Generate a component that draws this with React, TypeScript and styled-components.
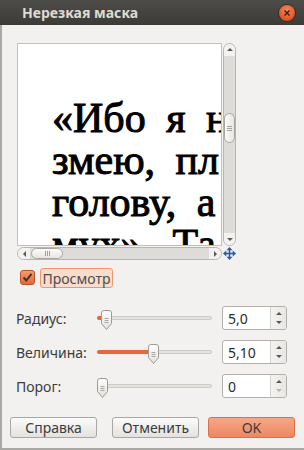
import React from 'react'
import styled, { createGlobalStyle } from 'styled-components'

const GlobalStyle = createGlobalStyle`
  html, body {
    margin: 0;
    padding: 0;
    background: #f2f1f0;
  }
  body {
    font-family: "Noto Sans", "DejaVu Sans", sans-serif;
    color: #3c3c3c;
  }
`

const Window = styled.div`
  width: 304px;
  height: 450px;
  display: flex;
  flex-direction: column;
  background: #f2f1f0;
  overflow: hidden;
`

const TitleBar = styled.div`
  height: 25px;
  flex: none;
  display: flex;
  align-items: center;
  justify-content: space-between;
  padding: 0 9px 0 22px;
  background: linear-gradient(#4d4c48, #3c3b37);
  color: #dfdbd2;
  font-size: 14px;
  font-weight: 700;
`

const CloseButton = styled.div`
  width: 16px;
  height: 16px;
  border-radius: 50%;
  display: flex;
  align-items: center;
  justify-content: center;
  background: radial-gradient(circle at 50% 35%, #f58a5e, #df4f1e 75%);
  box-shadow: 0 0 0 1px #2e2d2a;
`

const Body = styled.div`
  flex: 1;
  display: flex;
  flex-direction: column;
  border-left: 2px solid #a9a8a4;
  border-bottom: 2px solid #a9a8a4;
`

const PreviewGrid = styled.div`
  margin: 18px 0 0 15px;
  display: grid;
  grid-template-columns: 205px 14px;
  grid-template-rows: 203px 13px;
`

const ImageBox = styled.div`
  box-sizing: border-box;
  border: 1px solid #c3c0bb;
  background: #fff;
  overflow: hidden;
  padding: 53px 0 0 34px;
  font-family: "Liberation Serif", "Times New Roman", serif;
  font-weight: 400;
  font-size: 42px;
  line-height: 42px;
  color: #000;
  -webkit-text-stroke: 1px #000;
  word-spacing: 10px;
`

const TextLine = styled.div`
  white-space: nowrap;
`

const VScroll = styled.div`
  box-sizing: border-box;
  margin-left: 1px;
  width: 13px;
  border: 1px solid #b8b5b0;
  border-radius: 7px;
  background: #dedcd8;
  display: flex;
  flex-direction: column;
  overflow: hidden;
`

const HScroll = styled.div`
  box-sizing: border-box;
  height: 13px;
  margin-top: 1px;
  border: 1px solid #b8b5b0;
  border-radius: 7px;
  background: #dedcd8;
  display: flex;
  overflow: hidden;
`

const Stepper = styled.div<{ $vertical?: boolean }>`
  flex: none;
  ${({ $vertical }) => ($vertical ? 'height: 12px;' : 'width: 12px;')}
  display: flex;
  align-items: center;
  justify-content: center;
  background: #f3f2f0;
`

const Arrow = styled.span<{ $dir: 'up' | 'down' | 'left' | 'right'; $faded?: boolean }>`
  width: 0;
  height: 0;
  border: 3px solid transparent;
  ${({ $dir, $faded }) => {
    const c = $faded ? '#b9b6b1' : '#5a5955'
    if ($dir === 'up') return `border-bottom: 3px solid ${c}; border-top-width: 0; margin-top: -1px;`
    if ($dir === 'down') return `border-top: 3px solid ${c}; border-bottom-width: 0; margin-top: 1px;`
    if ($dir === 'left') return `border-right: 3px solid ${c}; border-left-width: 0;`
    return `border-left: 3px solid ${c}; border-right-width: 0;`
  }}
`

const Trough = styled.div<{ $vertical?: boolean }>`
  flex: 1;
  display: flex;
  flex-direction: ${({ $vertical }) => ($vertical ? 'column' : 'row')};
`

const Thumb = styled.div<{ $vertical?: boolean }>`
  box-sizing: border-box;
  flex: none;
  display: flex;
  align-items: center;
  justify-content: center;
  flex-direction: ${({ $vertical }) => ($vertical ? 'column' : 'row')};
  gap: 1px;
  border: 1px solid #a9a6a1;
  border-radius: 6px;
  background: ${({ $vertical }) =>
    $vertical ? 'linear-gradient(90deg, #fbfbfa, #e8e6e3)' : 'linear-gradient(#fbfbfa, #e8e6e3)'};
  ${({ $vertical }) => ($vertical ? 'width: 11px; height: 30px;' : 'height: 11px; width: 32px;')}
`

const Grip = styled.span<{ $vertical?: boolean }>`
  background: #a5a29d;
  ${({ $vertical }) => ($vertical ? 'width: 5px; height: 1px;' : 'width: 1px; height: 5px;')}
`

const NavCell = styled.div`
  display: flex;
  align-items: center;
  justify-content: center;
  margin-top: 1px;
`

const PreviewToggle = styled.label`
  margin: 7px 0 0 18px;
  display: flex;
  align-items: center;
  gap: 5px;
`

const CheckBox = styled.span`
  box-sizing: border-box;
  width: 15px;
  height: 15px;
  border: 1px solid #b85427;
  border-radius: 3px;
  background: linear-gradient(#f49c70, #e2683a);
  display: flex;
  align-items: center;
  justify-content: center;
`

const FocusLabel = styled.span`
  box-sizing: border-box;
  height: 20px;
  width: 73px;
  display: flex;
  align-items: center;
  justify-content: center;
  border: 1px solid #ec9770;
  border-radius: 3px;
  background: #f9dccc;
  font-size: 14px;
  color: #4c4c4c;
  margin-top: 2px;
`

const Settings = styled.div`
  margin: 18px 0 0 14px;
  display: grid;
  grid-template-columns: 71px 115px 65px;
  grid-auto-rows: 24px;
  column-gap: 10px;
  row-gap: 10px;
  align-items: center;
`

const FieldLabel = styled.span`
  font-size: 14px;
  color: #3c3c3c;
`

const SliderBox = styled.div`
  position: relative;
  height: 24px;
`

const Track = styled.div`
  position: absolute;
  left: 0;
  right: 0;
  top: 10px;
  height: 4px;
  box-sizing: border-box;
  border: 1px solid #cfccc7;
  border-radius: 2px;
  background: #e4e2de;
`

const Fill = styled.div`
  position: absolute;
  left: 0;
  top: 10px;
  height: 4px;
  border-radius: 2px;
  background: #e9653b;
`

const Knob = styled.svg`
  position: absolute;
  top: 4px;
`

const SpinBox = styled.div`
  box-sizing: border-box;
  height: 24px;
  display: flex;
  border: 1px solid #b3b0ab;
  border-radius: 3px;
  background: #fff;
  overflow: hidden;
`

const SpinValue = styled.span`
  flex: 1;
  display: flex;
  align-items: center;
  padding-left: 5px;
  font-size: 14px;
  color: #2b2b2b;
`

const SpinButtons = styled.div`
  width: 15px;
  border-left: 1px solid #d6d3ce;
  background: linear-gradient(90deg, #f4f3f1, #e9e7e4);
  display: flex;
  flex-direction: column;
  align-items: center;
  justify-content: center;
  gap: 5px;
`

const ButtonRow = styled.div`
  margin: 19px 9px 0 8px;
  display: flex;
  justify-content: space-between;
`

const ButtonGroup = styled.div`
  display: flex;
  gap: 9px;
`

const DialogButton = styled.button<{ $primary?: boolean }>`
  box-sizing: border-box;
  width: 87px;
  height: 21px;
  padding: 0;
  border: 1px solid ${({ $primary }) => ($primary ? '#d7714b' : '#aaa7a2')};
  border-radius: 3px;
  background: ${({ $primary }) =>
    $primary ? 'linear-gradient(#f6a887, #ee8760)' : 'linear-gradient(#fbfbfa, #e4e2de)'};
  font-family: "Noto Sans", "DejaVu Sans", sans-serif;
  font-size: 14px;
  line-height: 19px;
  color: #3c3c3c;
`

const KNOB_W = 11

function Slider({ value }: { value: number }) {
  const left = value * (115 - KNOB_W)
  return (
    <SliderBox>
      <Track />
      {value > 0 && <Fill style={{ width: left + KNOB_W / 2 }} />}
      <Knob width={KNOB_W} height={20} viewBox="0 0 11 20" style={{ left }}>
        <defs>
          <linearGradient id="knobFill" x1="0" x2="0" y1="0" y2="1">
            <stop offset="0" stopColor="#fdfdfc" />
            <stop offset="1" stopColor="#e3e1dd" />
          </linearGradient>
        </defs>
        <path
          d="M0.5 3 Q0.5 0.5 3 0.5 H8 Q10.5 0.5 10.5 3 V13.5 L5.5 19.5 L0.5 13.5 Z"
          fill="url(#knobFill)"
          stroke="#9e9b96"
        />
        <path d="M3.5 8.5 H7.5 M3.5 10.5 H7.5 M3.5 12.5 H7.5" stroke="#aaa7a2" />
      </Knob>
    </SliderBox>
  )
}

function Spin({ value, atMin }: { value: string; atMin?: boolean }) {
  return (
    <SpinBox>
      <SpinValue>{value}</SpinValue>
      <SpinButtons>
        <Arrow $dir="up" />
        <Arrow $dir="down" $faded={atMin} />
      </SpinButtons>
    </SpinBox>
  )
}

const rows = [
  { label: 'Радиус:', value: '5,0', pos: 0.043 },
  { label: 'Величина:', value: '5,10', pos: 0.495 },
  { label: 'Порог:', value: '0', pos: 0, atMin: true },
]

export default function App() {
  return (
    <>
      <GlobalStyle />
      <Window>
        <TitleBar>
          <span>Нерезкая маска</span>
          <CloseButton>
            <svg width="8" height="8" viewBox="0 0 8 8">
              <path d="M1.5 1.5 L6.5 6.5 M6.5 1.5 L1.5 6.5" stroke="#3a1a0c" strokeWidth="1.4" />
            </svg>
          </CloseButton>
        </TitleBar>
        <Body>
          <PreviewGrid>
            <ImageBox>
              <TextLine>«Ибо я н</TextLine>
              <TextLine>змею, пл</TextLine>
              <TextLine>голову, а</TextLine>
              <TextLine>мух». Та</TextLine>
            </ImageBox>
            <VScroll>
              <Stepper $vertical>
                <Arrow $dir="up" />
              </Stepper>
              <Trough $vertical>
                <div style={{ height: 57 }} />
                <Thumb $vertical>
                  <Grip $vertical />
                  <Grip $vertical />
                  <Grip $vertical />
                </Thumb>
              </Trough>
              <Stepper $vertical>
                <Arrow $dir="down" />
              </Stepper>
            </VScroll>
            <HScroll>
              <Stepper>
                <Arrow $dir="left" />
              </Stepper>
              <Trough>
                <div style={{ width: 1 }} />
                <Thumb>
                  <Grip />
                  <Grip />
                  <Grip />
                </Thumb>
              </Trough>
              <Stepper>
                <Arrow $dir="right" />
              </Stepper>
            </HScroll>
            <NavCell>
              <svg width="13" height="13" viewBox="0 0 13 13">
                <g fill="#2c5ca8">
                  <rect x="5.7" y="2" width="1.6" height="9" />
                  <rect x="2" y="5.7" width="9" height="1.6" />
                  <path d="M6.5 0 L9.5 3.3 H3.5 Z" />
                  <path d="M6.5 13 L9.5 9.7 H3.5 Z" />
                  <path d="M0 6.5 L3.3 3.5 V9.5 Z" />
                  <path d="M13 6.5 L9.7 3.5 V9.5 Z" />
                </g>
              </svg>
            </NavCell>
          </PreviewGrid>

          <PreviewToggle>
            <CheckBox>
              <svg width="11" height="11" viewBox="0 0 11 11">
                <path d="M1.5 5.5 L4.3 8.5 L9.5 1.8" fill="none" stroke="#4a3025" strokeWidth="2" />
              </svg>
            </CheckBox>
            <FocusLabel>Просмотр</FocusLabel>
          </PreviewToggle>

          <Settings>
            {rows.map((r) => (
              <React.Fragment key={r.label}>
                <FieldLabel>{r.label}</FieldLabel>
                <Slider value={r.pos} />
                <Spin value={r.value} atMin={r.atMin} />
              </React.Fragment>
            ))}
          </Settings>

          <ButtonRow>
            <DialogButton>Справка</DialogButton>
            <ButtonGroup>
              <DialogButton>Отменить</DialogButton>
              <DialogButton $primary>OK</DialogButton>
            </ButtonGroup>
          </ButtonRow>
        </Body>
      </Window>
    </>
  )
}
